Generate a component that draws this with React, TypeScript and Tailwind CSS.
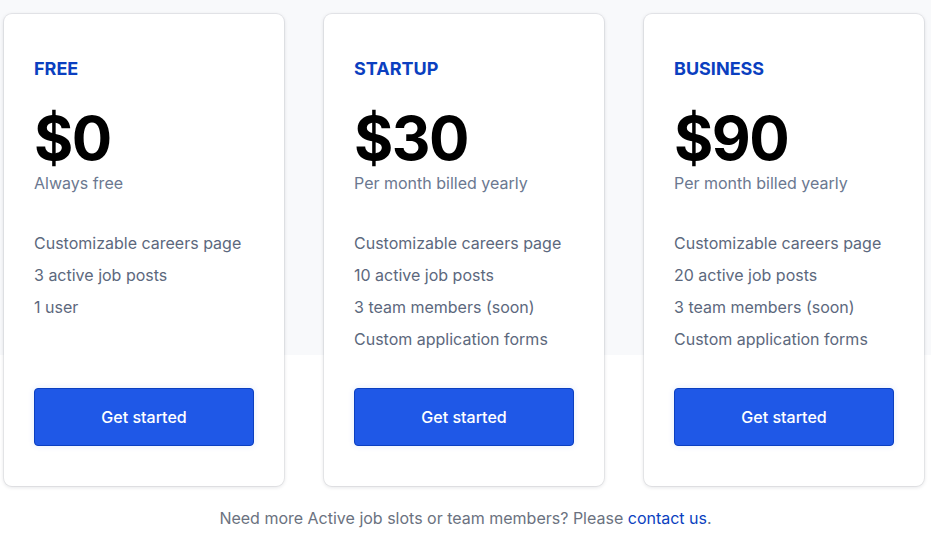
import React from 'react';

interface Plan {
  name: string;
  price: string;
  caption: string;
  features: string[];
}

const plans: Plan[] = [
  {
    name: 'FREE',
    price: '$0',
    caption: 'Always free',
    features: ['Customizable careers page', '3 active job posts', '1 user'],
  },
  {
    name: 'STARTUP',
    price: '$30',
    caption: 'Per month billed yearly',
    features: [
      'Customizable careers page',
      '10 active job posts',
      '3 team members (soon)',
      'Custom application forms',
    ],
  },
  {
    name: 'BUSINESS',
    price: '$90',
    caption: 'Per month billed yearly',
    features: [
      'Customizable careers page',
      '20 active job posts',
      '3 team members (soon)',
      'Custom application forms',
    ],
  },
];

const PlanCard: React.FC<{ plan: Plan }> = ({ plan }) => (
  <div className="flex flex-col rounded-lg bg-white px-[30px] pt-[41px] pb-10 shadow-[0_0_0_1px_rgba(15,23,42,0.06),0_1px_4px_rgba(15,23,42,0.14)]">
    <h3 className="text-lg leading-7 font-bold text-[#0b3fc0]">{plan.name}</h3>
    <p className="mt-[25px] text-[60px] leading-none font-bold tracking-tight text-black">{plan.price}</p>
    <p className="mt-[3px] text-base leading-6 text-[#6b7890]">{plan.caption}</p>
    <ul className="mt-8 flex-1">
      {plan.features.map((f) => (
        <li key={f} className="text-base leading-8 text-[#5c687d]">
          {f}
        </li>
      ))}
    </ul>
    <button className="mt-[33px] h-[58px] w-[220px] rounded border border-[#0b3fc0] bg-[#1f58e7] text-base font-medium text-white shadow-[0_0_6px_rgba(37,99,235,0.12)]">
      Get started
    </button>
  </div>
);

const App: React.FC = () => {
  return (
    <div className="min-h-screen bg-[linear-gradient(to_bottom,#f8f9fb_0,#f8f9fb_355px,#ffffff_355px)] font-['Inter','Liberation_Sans',sans-serif]">
      <div className="grid grid-cols-[280px_280px_280px] gap-10 pt-[14px] pl-[4px]">
        {plans.map((p) => (
          <PlanCard key={p.name} plan={p} />
        ))}
      </div>
      <p className="mt-5 text-center text-base leading-6 text-[#6b7280]">
        Need more Active job slots or team members? Please{' '}
        <a href="#" className="text-[#0b3fc0]">
          contact us
        </a>
        .
      </p>
    </div>
  );
};

export default App;
